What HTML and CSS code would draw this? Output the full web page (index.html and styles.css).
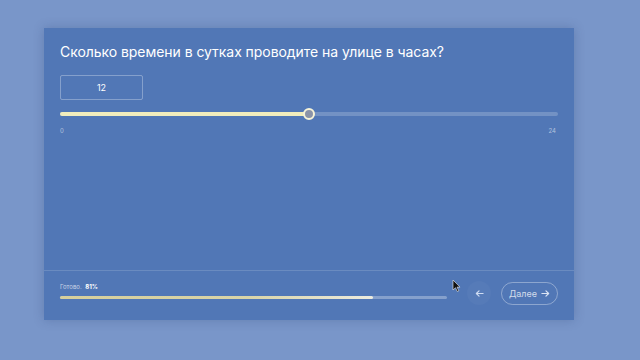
FILE: index.html
```html
<!DOCTYPE html>
<html lang="ru">
<head>
  <meta charset="UTF-8" />
  <meta name="viewport" content="width=device-width, initial-scale=1.0"/>
  <title>Опрос</title>
  <link rel="stylesheet" href="styles.css">
</head>
<body>
  <div class="card">
    <div class="main">
      <h1 class="question">Сколько времени в сутках проводите на улице в часах?</h1>
      <div class="value-box">12</div>
      <div class="slider">
        <div class="track"></div>
        <div class="fill" style="width: 50%;"></div>
        <div class="thumb" style="left: 50%;"></div>
      </div>
      <div class="range-labels">
        <span>0</span>
        <span>24</span>
      </div>
    </div>

    <div class="footer">
      <div class="progress">
        <div class="progress-label">Готово. <b>81%</b></div>
        <div class="progress-bar"><div class="progress-fill" style="width: 81%;"></div></div>
      </div>
      <button class="btn-back" aria-label="Назад">
        <svg width="9" height="9" viewBox="0 0 10 10"><path d="M9 5H1.5M4.5 2L1.5 5l3 3" fill="none" stroke="#cfdcf2" stroke-width="1.3" stroke-linecap="round" stroke-linejoin="round"/></svg>
      </button>
      <button class="btn-next">Далее
        <svg width="9" height="9" viewBox="0 0 10 10"><path d="M1 5h7.5M5.5 2l3 3-3 3" fill="none" stroke="#dbe4f4" stroke-width="1.3" stroke-linecap="round" stroke-linejoin="round"/></svg>
      </button>
      <svg class="cursor" width="9" height="13" viewBox="0 0 9 13"><path d="M1 1v10l2.5-2.3 1.8 3.8 1.5-.7-1.8-3.7H8z" fill="#111" stroke="#eee" stroke-width=".6"/></svg>
    </div>
  </div>
</body>
</html>
```

FILE: styles.css
```css
body {
    margin: 0;
    background: #7996c9;
    font-family: "Inter", "Noto Sans", sans-serif;
    color: #fff;
    height: 360px;
    overflow: hidden;
}
.card {
    margin: 28px 0 0 44px;
    width: 530px;
    height: 292px;
    background: #5177b6;
    box-shadow: 0 0 10px rgba(30, 50, 100, 0.25);
    display: flex;
    flex-direction: column;
}
.main {
    flex: 1;
    padding: 14px 16px 0;
}
.question {
    margin: 0;
    font-size: 14px;
    line-height: 20px;
    font-weight: 400;
    letter-spacing: -0.05px;
}
.value-box {
    margin-top: 13px;
    width: 81px;
    height: 23px;
    border: 1px solid rgba(255, 255, 255, 0.3);
    border-radius: 2px;
    display: flex;
    align-items: center;
    justify-content: center;
    font-size: 9px;
}
.slider {
    position: relative;
    margin-top: 7px;
    height: 14px;
    width: 498px;
}
.track,
.fill {
    position: absolute;
    top: 5px;
    left: 0;
    height: 4px;
    border-radius: 2px;
}
.track {
    width: 100%;
    background: rgba(255, 255, 255, 0.2);
}
.fill {
    background: #f1edbd;
}
.thumb {
    position: absolute;
    top: 1px;
    width: 8px;
    height: 8px;
    margin-left: -6px;
    border: 2px solid #f6f3d8;
    border-radius: 50%;
    background: #8a93a8;
}
.range-labels {
    margin-top: 6px;
    width: 496px;
    display: flex;
    justify-content: space-between;
    font-size: 6px;
    color: rgba(255, 255, 255, 0.55);
}
.footer {
    position: relative;
    height: 44px;
    border-top: 1px solid rgba(255, 255, 255, 0.15);
    padding: 0 16px 5px;
    display: flex;
    align-items: center;
}
.progress {
    width: 387px;
    margin-top: -4px;
}
.progress-label {
    font-size: 6px;
    color: rgba(255, 255, 255, 0.7);
    margin-bottom: 6px;
}
.progress-label b {
    color: #fff;
    font-weight: 700;
    margin-left: 2px;
}
.progress-bar {
    height: 3px;
    background: rgba(255, 255, 255, 0.3);
    border-radius: 2px;
}
.progress-fill {
    height: 100%;
    border-radius: 2px;
    background: linear-gradient(90deg, #d6cf9c, #d9d4a8 60%, #ecebdf);
}
.btn-back {
    margin-left: 20px;
    width: 24px;
    height: 24px;
    border-radius: 50%;
    border: none;
    background: rgba(255, 255, 255, 0.03);
    display: flex;
    align-items: center;
    justify-content: center;
    padding: 0;
}
.btn-next {
    margin-left: 10px;
    width: 57px;
    height: 23px;
    border: 1px solid rgba(255, 255, 255, 0.35);
    border-radius: 12px;
    background: none;
    color: rgba(255, 255, 255, 0.75);
    font-family: inherit;
    font-size: 9px;
    display: flex;
    align-items: center;
    justify-content: center;
    gap: 4px;
    padding: 0;
}
.cursor {
    position: absolute;
    left: 408px;
    top: 8px;
}
```
